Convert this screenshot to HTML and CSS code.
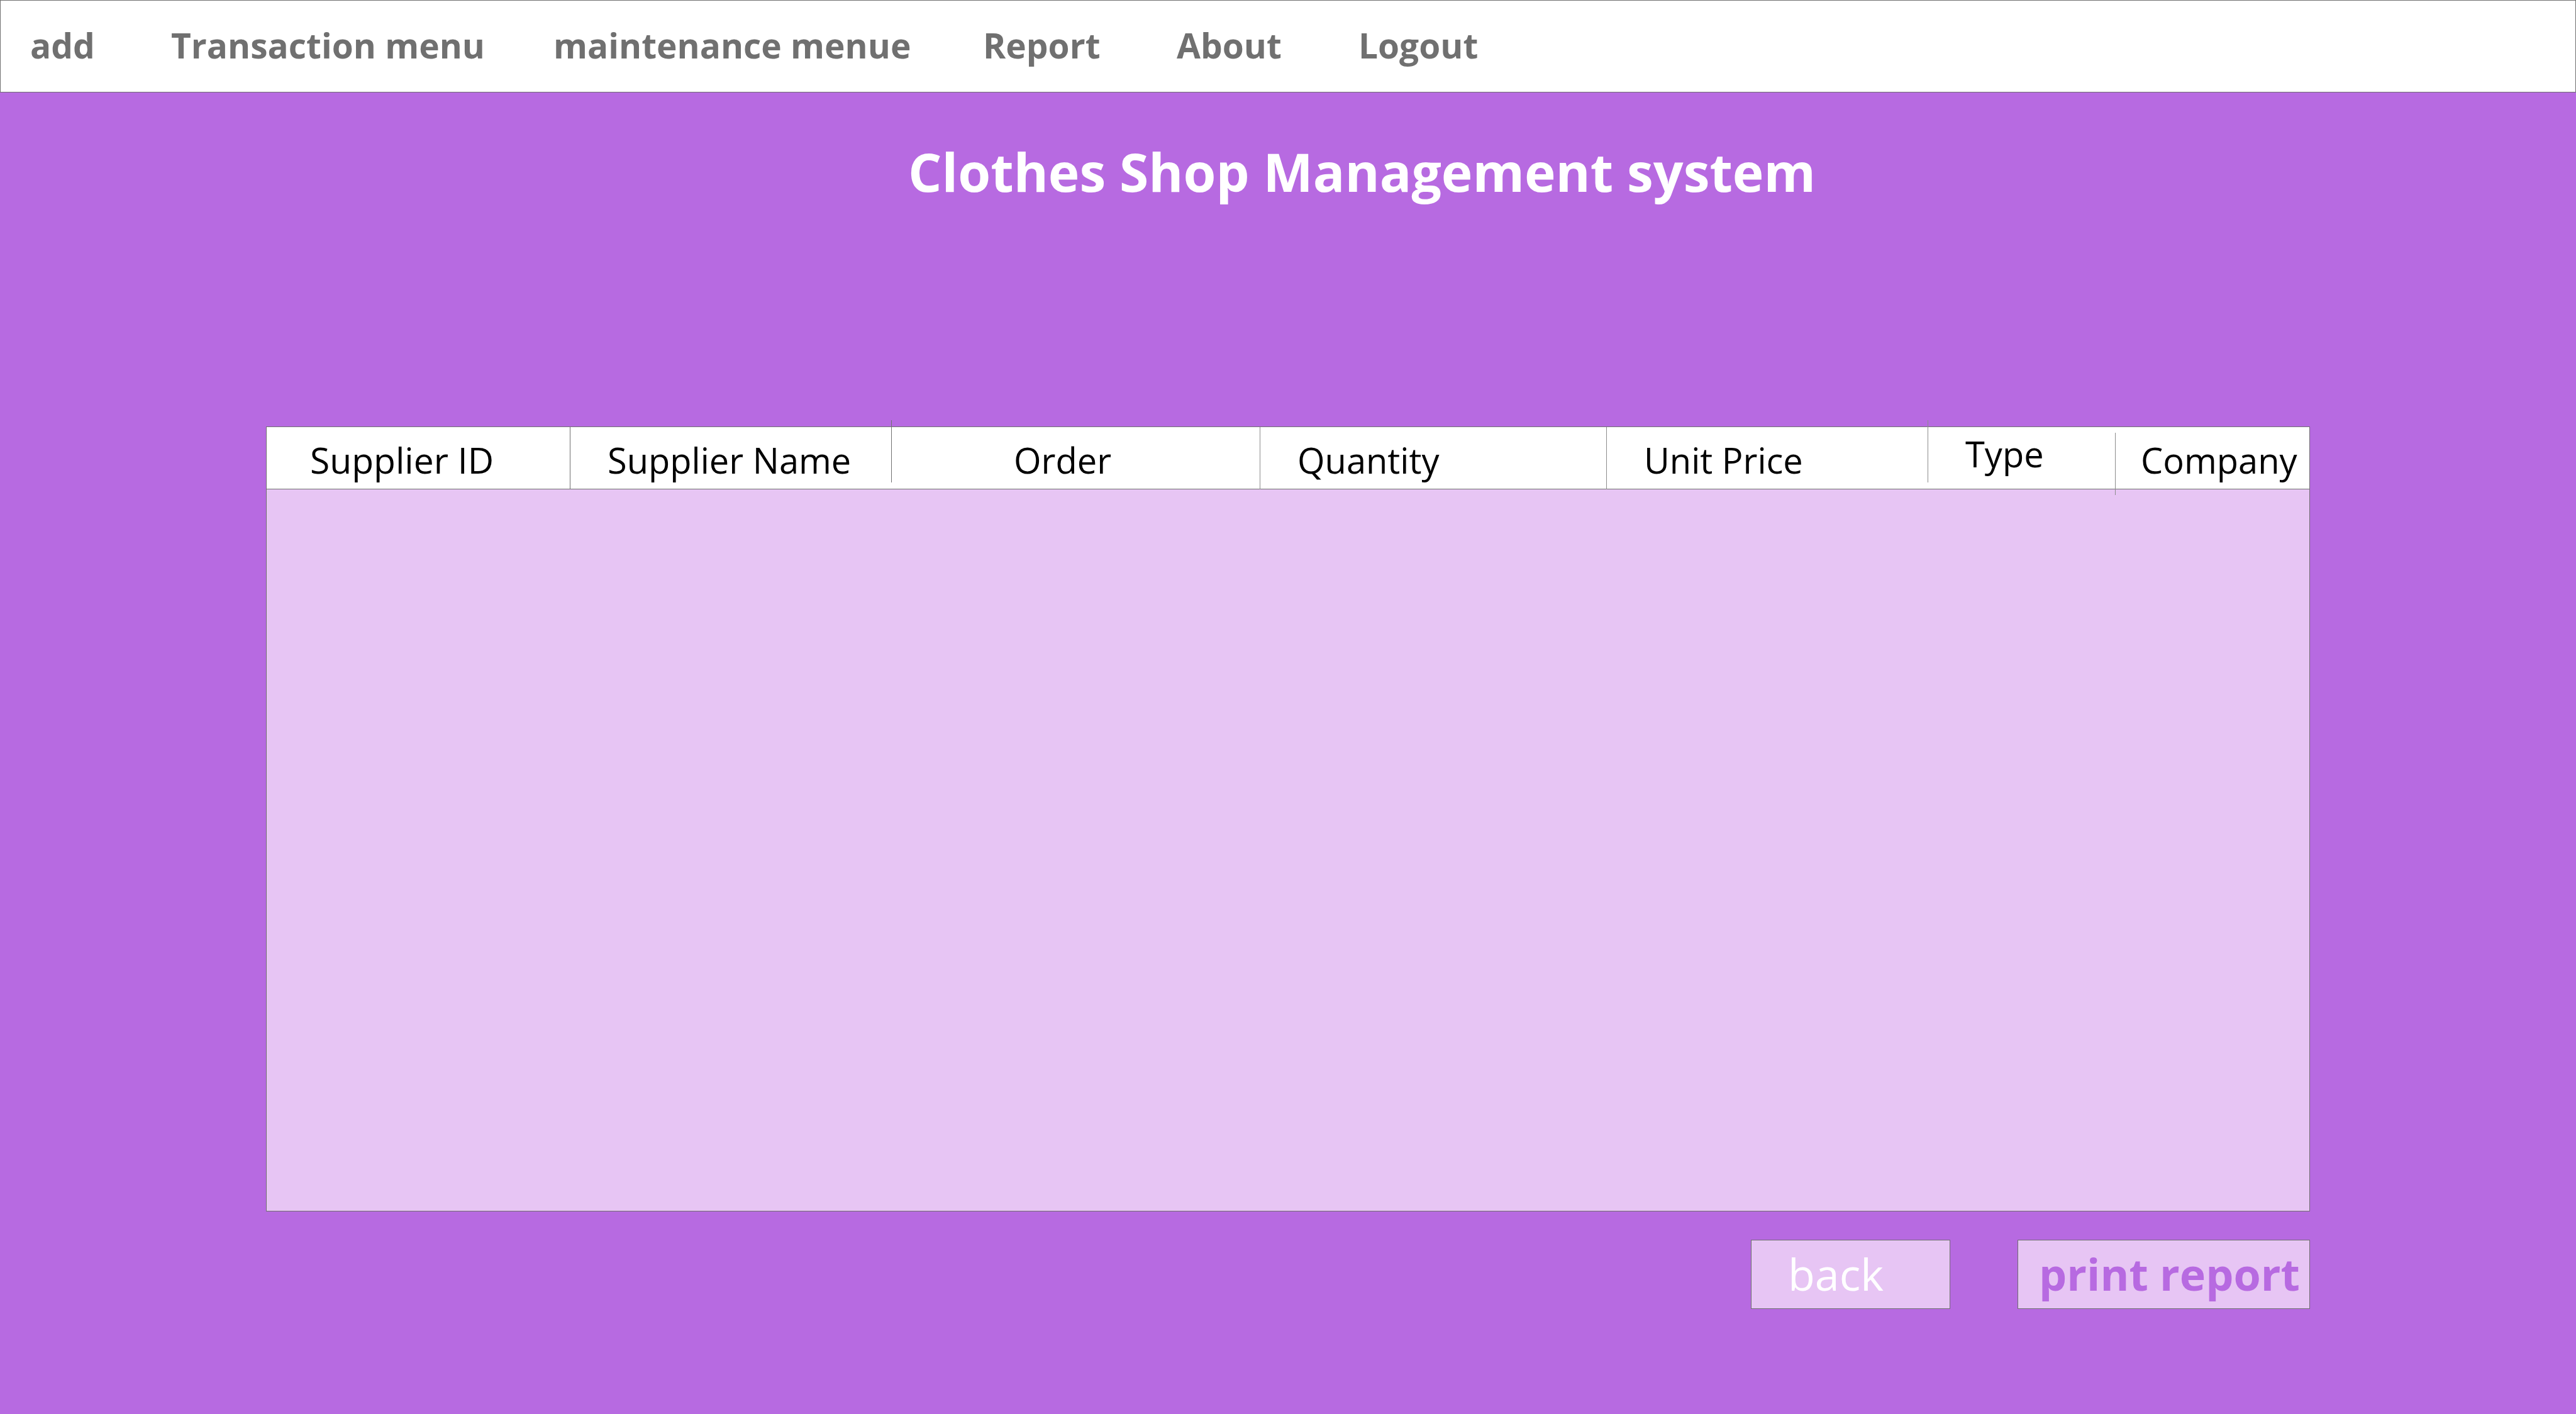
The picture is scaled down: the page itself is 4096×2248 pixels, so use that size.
FILE: index.html
```html
<!DOCTYPE html>
<html lang="en">
<head>
<meta charset="utf-8">
<meta name="viewport" content="width=device-width, initial-scale=1">
<title>Clothes Shop Management system</title>
<link rel="stylesheet" href="styles.css">
</head>
<body>
<nav class="menu">
  <a href="#add">add</a>
  <a href="#transaction">Transaction menu</a>
  <a href="#maintenance">maintenance menue</a>
  <a href="#report">Report</a>
  <a href="#about">About</a>
  <a href="#logout">Logout</a>
</nav>
<main class="page">
  <h1 class="title">Clothes Shop Management system</h1>
  <div class="panel">
    <table class="report">
      <colgroup>
        <col class="col-id">
        <col class="col-name">
        <col class="col-order">
        <col class="col-quantity">
        <col class="col-price">
        <col class="col-type">
        <col class="col-company">
      </colgroup>
      <thead>
        <tr>
          <th scope="col" class="first">Supplier ID</th>
          <th scope="col">Supplier Name</th>
          <th scope="col" class="wide raised-line">Order</th>
          <th scope="col" class="light">Quantity</th>
          <th scope="col" class="light">Unit Price</th>
          <th scope="col" class="light raised-line raised-text">Type</th>
          <th scope="col" class="light lowered-line narrow">Company</th>
        </tr>
      </thead>
      <tbody></tbody>
    </table>
  </div>
  <div class="actions">
    <button type="button" class="button back">back</button>
    <button type="button" class="button print">print report</button>
  </div>
</main>
</body>
</html>
```
FILE: styles.css
```css
* {
  box-sizing: border-box;
}

body {
  margin: 0;
  min-height: 100vh;
  display: flex;
  flex-direction: column;
  background: #b76ae1;
  font-family: "Open Sans", "Noto Sans", sans-serif;
}

.menu {
  display: grid;
  grid-template-columns: 224px 608px 683px 308px 289px auto;
  justify-content: start;
  align-items: center;
  height: 147px;
  padding: 0 47px 4px;
  background: #fff;
  border: 1px solid #707070;
}

.menu a {
  color: #707070;
  font-size: 55px;
  font-weight: 700;
  line-height: 74px;
  text-decoration: none;
  white-space: nowrap;
}

.page {
  flex: 1;
  display: flex;
  flex-direction: column;
  padding: 71px 423px 167px;
}

.title {
  margin: 0 0 350px;
  padding-left: 235px;
  color: #fff;
  font-size: 84px;
  font-weight: 700;
  line-height: 110px;
  text-align: center;
  white-space: nowrap;
}

.panel {
  flex: 1;
  background: #e7c5f4;
  border: 1px solid #707070;
}

.report {
  width: 100%;
  table-layout: fixed;
  border-spacing: 0;
}

.col-id { width: 482px; }
.col-name { width: 511px; }
.col-order { width: 586px; }
.col-quantity { width: 551px; }
.col-price { width: 511px; }
.col-type { width: 298px; }
.col-company { width: 309px; }

.report th {
  position: relative;
  padding: 14px 0 8px 60px;
  background: #fff;
  border-bottom: 1px solid #707070;
  color: #000;
  font-size: 56px;
  font-weight: 400;
  line-height: 76px;
  text-align: left;
  vertical-align: top;
  white-space: nowrap;
}

/* Column dividers */
.report th::before {
  content: "";
  position: absolute;
  top: 0;
  left: 0;
  width: 1px;
  height: 99px;
  background: #707070;
}

.report th.light::before { background: #8c8c8c; }
.report th.raised-line::before { top: -11px; }
.report th.lowered-line::before { top: 9px; }
.report th.first::before { display: none; }

.report th.first {
  padding-left: 69px;
  font-size: 57px;
}

.report th.wide { padding-left: 195px; }
.report th.narrow { padding-left: 41px; }
.report th.raised-text { padding-top: 4px; }

.actions {
  display: flex;
  justify-content: flex-end;
  gap: 107px;
  margin-top: 45px;
}

.button {
  height: 110px;
  padding: 0 0 2px;
  background: #e7c5f4;
  border: 1px solid #707070;
  border-radius: 0;
  font-family: inherit;
  font-size: 70px;
  line-height: 96px;
  text-align: left;
  white-space: nowrap;
}

.back {
  width: 317px;
  padding-left: 58px;
  color: #fff;
}

.print {
  width: 465px;
  padding-left: 33px;
  color: #b76ae1;
  font-weight: 700;
}
```
